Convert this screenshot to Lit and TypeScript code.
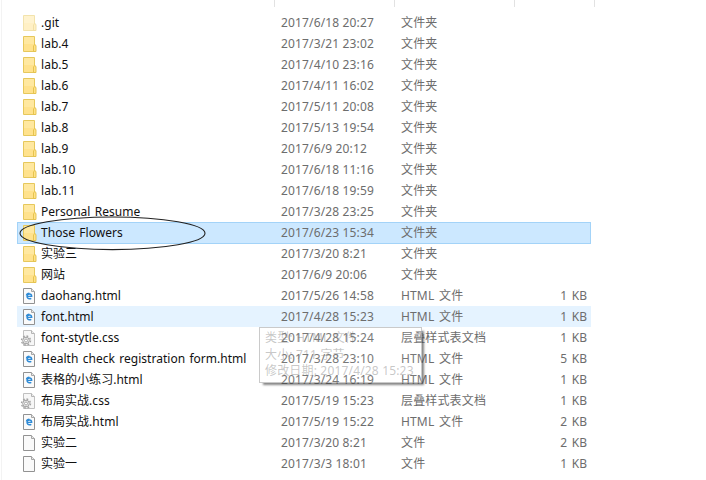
import { LitElement, html, css, svg } from "lit";
import { customElement } from "lit/decorators.js";
import { classMap } from "lit/directives/class-map.js";

type Kind = "folder" | "hidden" | "html" | "css" | "file";
interface Entry { name: string; date: string; type: string; size?: string; kind: Kind; state?: "selected" | "hover"; }

const dir = (name: string, date: string, kind: Kind = "folder"): Entry => ({ name, date, type: "文件夹", kind });
const page = (name: string, date: string, size: string): Entry => ({ name, date, type: "HTML 文件", size, kind: "html" });
const sheet = (name: string, date: string): Entry => ({ name, date, type: "层叠样式表文档", size: "1 KB", kind: "css" });

const entries: Entry[] = [
  dir(".git", "2017/6/18 20:27", "hidden"),
  dir("lab.4", "2017/3/21 23:02"),
  dir("lab.5", "2017/4/10 23:16"),
  dir("lab.6", "2017/4/11 16:02"),
  dir("lab.7", "2017/5/11 20:08"),
  dir("lab.8", "2017/5/13 19:54"),
  dir("lab.9", "2017/6/9 20:12"),
  dir("lab.10", "2017/6/18 11:16"),
  dir("lab.11", "2017/6/18 19:59"),
  dir("Personal Resume", "2017/3/28 23:25"),
  { ...dir("Those Flowers", "2017/6/23 15:34"), state: "selected" },
  dir("实验三", "2017/3/20 8:21"),
  dir("网站", "2017/6/9 20:06"),
  page("daohang.html", "2017/5/26 14:58", "1 KB"),
  { ...page("font.html", "2017/4/28 15:23", "1 KB"), state: "hover" },
  sheet("font-stytle.css", "2017/4/28 15:24"),
  page("Health check registration form.html", "2017/3/28 23:10", "5 KB"),
  page("表格的小练习.html", "2017/3/24 16:19", "1 KB"),
  sheet("布局实战.css", "2017/5/19 15:23"),
  page("布局实战.html", "2017/5/19 15:22", "2 KB"),
  { name: "实验二", date: "2017/3/20 8:21", type: "文件", size: "2 KB", kind: "file" },
  { name: "实验一", date: "2017/3/3 18:01", type: "文件", size: "1 KB", kind: "file" },
];

const folder = svg`
  <path d="M2.5 1.500h11v15h-11z" fill="#ffe8a0" stroke="#e6c85c"/>
  <path d="M3 9h10v7H3z" fill="#ffde80" opacity=".6"/>
  <path d="M12.500 16.500v-5.500l1.200-1.500 1.300 1v6z" fill="#ffe389" stroke="#e3bf48" stroke-width=".9"/>`;
const sheetPaper = svg`
  <path d="M2.500 1.500h8l3 3v12h-11z" fill="#fafafa" stroke="#929292"/>
  <path d="M10.500 1.500v3h3" fill="#e8e8e8" stroke="#a6a6a6"/>`;
const edge = svg`
  <path d="M6.200 9.300h4.500c0-1.500-.9-2.300-2.300-2.300-1.500 0-2.400 1-2.400 2.300 0 1.500 1 2.400 2.600 2.400.7 0 1.200-.1 1.700-.4M5.400 8.500c.3-1.300 1.300-2.300 2.900-2.300" fill="none" stroke="#2f8bd6" stroke-width="1.350"/>`;
const gear = svg`
  <path d="M2.500 1.500h8l3 3v12h-11z" fill="#f7f7f7" stroke="#c0c0c0"/>
  <path d="M10.500 1.500v3h3" fill="#eee" stroke="#b5b5b5"/>
  <circle cx="5" cy="11.500" r="4.500" fill="none" stroke="#a3a3a3" stroke-width="1.400" stroke-dasharray="1.767 1.767"/>
  <circle cx="5" cy="11.500" r="3.300" fill="#eee" stroke="#a0a0a0" stroke-width="1"/>
  <circle cx="5" cy="11.500" r="1.500" fill="#fff" stroke="#a0a0a0" stroke-width=".9"/>`;

@customElement("file-icon")
class FileIcon extends LitElement {
  static properties = { kind: {} };
  declare kind: Kind;
  static styles = css`
    :host { display: block; width: 16px; height: 18px; }
    svg { display: block; overflow: visible; }
    .hidden { opacity: 0.5; }
  `;
  render() {
    const art = this.kind === "html" ? svg`${sheetPaper}${edge}` : this.kind === "css" ? gear : this.kind === "file" ? sheetPaper : folder;
    return html`<svg class=${this.kind} width="16" height="18" viewBox="0 0 16 18">${art}</svg>`;
  }
}

@customElement("app-root")
export class AppRoot extends LitElement {
  static styles = css`
    :host {
      display: block; position: relative; box-sizing: border-box; width: 706px; height: 480px;
      overflow: hidden; background: #fff; border-left: 1px solid #fff;
      font: 12px/21px "Noto Sans", "Noto Sans CJK SC", sans-serif; color: #6d6d6d;
    }
    .pane { box-sizing: border-box; height: 480px; border-left: 1px solid #f3f3f3; padding-left: 15px; }
    .header, .row { display: grid; grid-template-columns: 258px 120px 120px 76px; width: 574px; }
    .header { height: 12px; grid-template-columns: 258px 120px 120px 80px; width: 578px; }
    .header span { height: 7px; border-right: 1px solid #e2e2e2; box-sizing: border-box; }
    .row { height: 21px; white-space: pre; }
    .selected { background: #cce8ff; box-shadow: inset 0 1px #a3d3f8, inset 1px 0 #a3d3f8, inset -1px 0 #a3d3f8, 0 1px 0 #a3d3f8; }
    .hover { background: #e5f3ff; }
    .name { display: flex; align-items: center; gap: 4px; padding-left: 4px; color: #111; letter-spacing: 0.03px; word-spacing: 1.1px; }
    .date { padding-left: 6px; letter-spacing: 0.15px; }
    .type { padding-left: 6px; letter-spacing: 0.15px; word-spacing: 1.5px; }
    .size { text-align: right; padding-right: 4px; word-spacing: 1.5px; }
    .tip {
      position: absolute; left: 258px; top: 327px; width: 163px; height: 56px; box-sizing: border-box;
      border: 1px solid rgba(150, 150, 150, 0.5); box-shadow: 3px 3px 2px -1px rgba(70, 70, 70, 0.65);
      padding: 2px 0 0 5px; line-height: 16.6px; color: rgba(120, 120, 120, 0.42); white-space: nowrap;
      background: rgba(255, 255, 255, 0.08); letter-spacing: 0.17px;
    }
    .ring { position: absolute; left: 18px; top: 214px; }
  `;
  render() {
    return html`
      <div class="pane">
        <div class="header"><span></span><span></span><span></span><span></span></div>
        ${entries.map((e) => html`
          <div class=${classMap({ row: true, selected: e.state === "selected", hover: e.state === "hover" })}>
            <div class="name"><file-icon .kind=${e.kind}></file-icon><span>${e.name}</span></div>
            <div class="date">${e.date}</div>
            <div class="type">${e.type}</div>
            <div class="size">${e.size ?? ""}</div>
          </div>`)}
      </div>
      <div class="tip">
        <div>类型: HTML 文件</div>
        <div>大小: 711 字节</div>
        <div>修改日期: 2017/4/28 15:23</div>
      </div>
      <svg class="ring" width="188" height="38"><ellipse cx="93.500" cy="19.300" rx="92.500" ry="16.300" fill="none" stroke="#222" stroke-width="1.100"/></svg>
    `;
  }
}
